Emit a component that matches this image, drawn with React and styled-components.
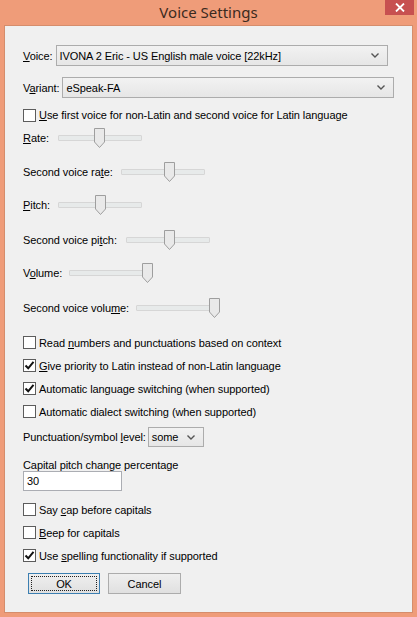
import React from "react";
import styled, { createGlobalStyle } from "styled-components";

const Global = createGlobalStyle`
  html, body { margin: 0; padding: 0; background: #ef9c79; }
  * { box-sizing: border-box; }
`;

const Frame = styled.div`
  width: 417px;
  height: 617px;
  background: #ef9c79;
  display: flex;
  flex-direction: column;
  padding: 0 4px 4px 4px;
  font-family: "Liberation Sans", Arial, sans-serif;
  font-size: 11px;
  letter-spacing: -0.08px;
  color: #000;
`;

const TitleBar = styled.div`
  height: 25px;
  flex: none;
  display: flex;
  align-items: center;
  justify-content: center;
  position: relative;
  font-family: "Noto Sans", "Open Sans", sans-serif;
  font-size: 15px;
  letter-spacing: 0;
  color: #3b2a20;
  padding-bottom: 2px;
`;

const CloseBtn = styled.div`
  position: absolute;
  top: 0;
  right: -1px;
  width: 29px;
  height: 15px;
  background: #c75050;
  display: flex;
  align-items: center;
  justify-content: center;
`;

const Client = styled.div`
  flex: 1;
  background: #f0f0f0;
  border: 1px solid #d58d6c;
  padding: 19px 18px 0 17px;
  display: flex;
  flex-direction: column;
`;

const Row = styled.div`
  display: flex;
  align-items: center;
  height: ${(p) => p.$h}px;
  margin-top: ${(p) => p.$top || 0}px;
  padding-left: ${(p) => p.$indent || 0}px;
  gap: ${(p) => p.$gap || 0}px;
  flex: none;
`;

const Label = styled.span`
  white-space: nowrap;
  u { text-decoration: underline; text-underline-offset: 1px; }
`;

const SelectBox = styled.div`
  width: ${(p) => p.$w}px;
  height: ${(p) => p.$hh || 21}px;
  margin-left: ${(p) => p.$ml || 3}px;
  border: 1px solid #acacac;
  background: linear-gradient(#f2f2f2, #e6e6e6);
  display: flex;
  align-items: center;
  justify-content: space-between;
  padding: 0 8px 0 3px;
  white-space: nowrap;
`;

const Chevron = () => (
  <svg width="8" height="5" viewBox="0 0 8 5">
    <path d="M0.5 0.5 L4 4 L7.5 0.5" fill="none" stroke="#555" strokeWidth="1.4" />
  </svg>
);

const Select = ({ w, ml, h, children }) => (
  <SelectBox $w={w} $ml={ml} $hh={h}>
    <span>{children}</span>
    <Chevron />
  </SelectBox>
);

const Box = styled.span`
  width: 13px;
  height: 13px;
  flex: none;
  background: #fff;
  border: 1px solid #5c5c5c;
  display: flex;
  align-items: center;
  justify-content: center;
  margin-left: 1px;
  margin-right: 3px;
`;

const Check = ({ checked, children }) => (
  <Row $h={23}>
    <Box>
      {checked && (
        <svg width="11" height="11" viewBox="0 0 11 11">
          <path d="M1.5 5.5 L4.2 8.3 L9.5 1.8" fill="none" stroke="#111" strokeWidth="2" />
        </svg>
      )}
    </Box>
    <Label>{children}</Label>
  </Row>
);

const Track = styled.div`
  position: relative;
  width: ${(p) => p.$w}px;
  height: 20px;
  margin-left: ${(p) => p.$ml}px;
  flex: none;
  &::before {
    content: "";
    position: absolute;
    left: 0;
    right: 0;
    top: 7px;
    height: 4px;
    background: #e7eaea;
    border: 1px solid #d6d6d6;
    border-radius: 1px;
  }
`;

const Thumb = styled.svg`
  position: absolute;
  top: 0;
`;

const Slider = ({ w = 84, ml, value }) => (
  <Track $w={w} $ml={ml}>
    <Thumb width="11" height="20" viewBox="0 0 11 20" style={{ left: (w - 11) * value }}>
      <path d="M0.5 0.5 H10.5 V14 L5.5 19.5 L0.5 14 Z" fill="#e9e9e9" stroke="#9e9e9e" />
    </Thumb>
  </Track>
);

const Caption = styled.div`
  height: 13px;
  margin-top: ${(p) => p.$top}px;
  display: flex;
  align-items: center;
  padding-left: 1px;
`;

const TextInput = styled.div`
  width: 99px;
  height: 20px;
  margin-left: 1px;
  background: #fff;
  border: 1px solid #abadb3;
  display: flex;
  align-items: center;
  padding-left: 3px;
  flex: none;
`;

const Button = styled.div`
  width: ${(p) => p.$w}px;
  height: 21px;
  display: flex;
  align-items: center;
  justify-content: center;
  background: linear-gradient(#efefef, #e0e0e0);
  border: 1px solid ${(p) => (p.$focus ? "#3c7fb1" : "#acacac")};
  position: relative;
  ${(p) =>
    p.$focus &&
    `&::after {
      content: "";
      position: absolute;
      inset: 2px;
      border: 1px dotted #222;
    }`}
`;

export default function App() {
  return (
    <>
      <Global />
      <Frame>
        <TitleBar>
          Voice Settings
          <CloseBtn>
            <svg width="10" height="9" viewBox="0 0 10 9">
              <path d="M1 0.5 L9 8.5 M9 0.5 L1 8.5" stroke="#fff" strokeWidth="1.8" />
            </svg>
          </CloseBtn>
        </TitleBar>
        <Client>
          <Row $h={21} $indent={1}>
            <Label><u>V</u>oice:</Label>
            <Select w={332}>IVONA 2 Eric - US English male voice [22kHz]</Select>
          </Row>
          <Row $h={21} $top={11} $indent={1}>
            <Label>V<u>a</u>riant:</Label>
            <Select w={332}>eSpeak-FA</Select>
          </Row>
          <Row $h={14} $top={10}>
            <Box />
            <Label><u>U</u>se first voice for non-Latin and second voice for Latin language</Label>
          </Row>
          <Row $h={24} $top={4} $indent={1}>
            <Label><u>R</u>ate:</Label>
            <Slider ml={9} value={0.5} />
          </Row>
          <Row $h={24} $top={10} $indent={1}>
            <Label>Second voice ra<u>t</u>e:</Label>
            <Slider ml={8} value={0.6} />
          </Row>
          <Row $h={24} $top={9} $indent={1}>
            <Label><u>P</u>itch:</Label>
            <Slider ml={8} value={0.5} />
          </Row>
          <Row $h={24} $top={11} $indent={1}>
            <Label>Second voice pi<u>t</u>ch:</Label>
            <Slider ml={9} value={0.52} />
          </Row>
          <Row $h={24} $top={9} $indent={1}>
            <Label>V<u>o</u>lume:</Label>
            <Slider ml={7} value={1} />
          </Row>
          <Row $h={24} $top={11} $indent={1}>
            <Label>Second voice volu<u>m</u>e:</Label>
            <Slider ml={7} value={1} />
          </Row>
          <Row $h={0} $top={11} />
          <Check>Read <u>n</u>umbers and punctuations based on context</Check>
          <Check checked><u>G</u>ive priority to Latin instead of non-Latin language</Check>
          <Check checked>Automatic language switching (when supported)</Check>
          <Check>Automatic dialect switching (when supported)</Check>
          <Row $h={20} $top={4} $indent={1}>
            <Label>Punctuation/symbol <u>l</u>evel:</Label>
            <Select w={56} ml={2} h={20}>some</Select>
          </Row>
          <Caption $top={11}>Capital pitch change percentage</Caption>
          <Row $h={20}>
            <TextInput>30</TextInput>
          </Row>
          <Row $h={0} $top={7} />
          <Check>Say <u>c</u>ap before capitals</Check>
          <Check><u>B</u>eep for capitals</Check>
          <Check checked>Use <u>s</u>pelling functionality if supported</Check>
          <Row $h={21} $top={6} $indent={6} $gap={8}>
            <Button $w={72} $focus>OK</Button>
            <Button $w={73}>Cancel</Button>
          </Row>
        </Client>
      </Frame>
    </>
  );
}
